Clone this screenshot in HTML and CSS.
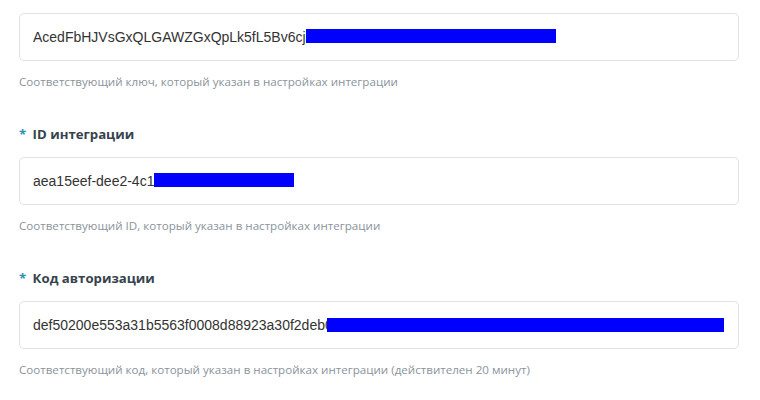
FILE: index.html
```html
<!DOCTYPE html>
<html lang="ru">
<head>
<meta charset="utf-8">
<link rel="stylesheet" href="styles.css">
</head>
<body>
<div class="form">
  <div class="field field-first">
    <div class="input"><span class="val">AcedFbHJVsGxQLGAWZGxQpLk5fL5Bv6cj</span><span class="redact r1"></span></div>
    <div class="hint">Соответствующий ключ, который указан в настройках интеграции</div>
  </div>
  <div class="field">
    <div class="label"><span class="req">*</span> ID интеграции</div>
    <div class="input"><span class="val">aea15eef-dee2-4c1</span><span class="redact r2"></span></div>
    <div class="hint">Соответствующий ID, который указан в настройках интеграции</div>
  </div>
  <div class="field">
    <div class="label"><span class="req">*</span> Код авторизации</div>
    <div class="input"><span class="val">def50200e553a31b5563f0008d88923a30f2deb0</span><span class="redact r3"></span></div>
    <div class="hint">Соответствующий код, который указан в настройках интеграции (действителен 20 минут)</div>
  </div>
</div>
</body>
</html>
```
FILE: styles.css
```css
html, body {
  margin: 0;
  padding: 0;
  background: #ffffff;
}
.form {
  width: 720px;
  padding: 13px 0 0 19px;
  display: flex;
  flex-direction: column;
}
.field {
  display: flex;
  flex-direction: column;
  margin-bottom: 34px;
}
.label {
  font-family: "Open Sans", "Noto Sans", sans-serif;
  font-weight: 700;
  font-size: 13.2px;
  line-height: 20px;
  height: 20px;
  color: #36434d;
  margin-bottom: 13px;
}
.req {
  color: #2f8fb0;
  margin-right: 3px;
}
.input {
  box-sizing: border-box;
  height: 48px;
  border: 1px solid #dfe2e6;
  border-radius: 5px;
  padding: 0 13px;
  display: flex;
  align-items: center;
  font-family: "Liberation Sans", Arial, sans-serif;
  font-size: 14px;
  color: #333333;
  white-space: nowrap;
  overflow: hidden;
}
.redact {
  display: inline-block;
  height: 14px;
  background: #0000ff;
  flex: none;
}
.r1 { width: 250px; margin-top: -3px; }
.r2 { width: 140px; margin-top: -2px; }
.r3 { width: 397px; margin-left: -6px; }
.hint {
  font-family: "Open Sans", "Noto Sans", sans-serif;
  font-size: 11.6px;
  line-height: 16px;
  color: #8a939b;
  margin-top: 13px;
}
```
